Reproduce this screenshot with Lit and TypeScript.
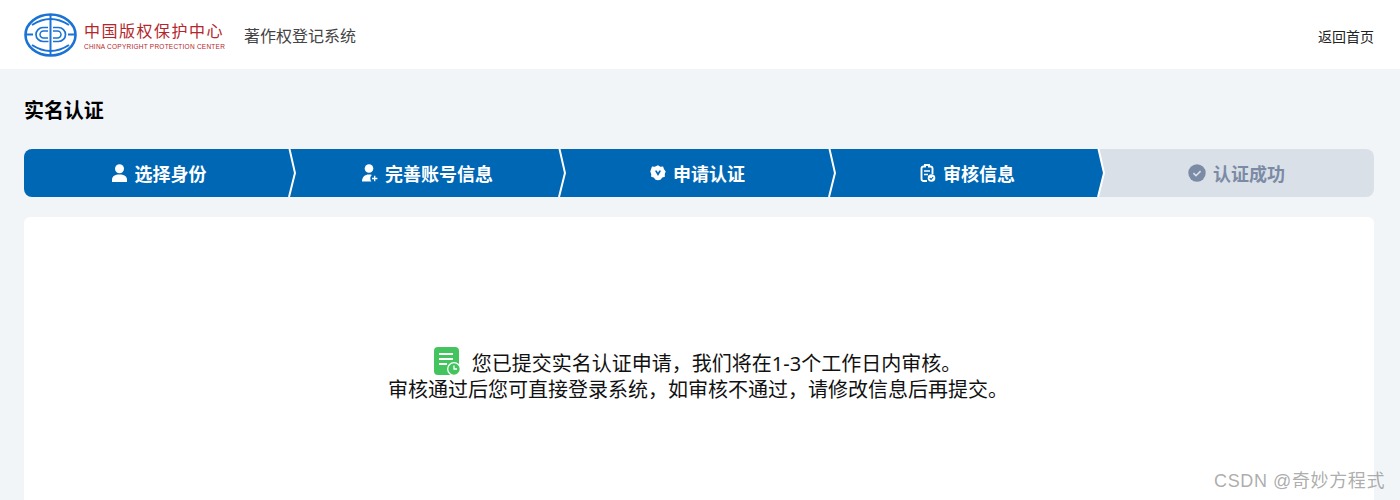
import { LitElement, html, css, svg } from "lit";
import { customElement } from "lit/decorators.js";

const icons = {
  user: svg`<svg class="ico" viewBox="0 0 16 18"><circle cx="7.500" cy="4.700" r="4.500" fill="currentColor"/><path d="M0 18v-2.200C0 12.300 3 10.500 7.500 10.500S15 12.300 15 15.800V18z" fill="currentColor"/></svg>`,
  userAdd: svg`<svg class="ico" viewBox="0 0 16 18"><circle cx="7" cy="4.500" r="4.300" fill="currentColor"/><path d="M0 17.500c.2-4.800 2.700-7 7-7 1 0 2 .1 2.800.5-.9.800-1.500 2-1.500 3.300 0 1.200.4 2.400 1.200 3.200z" fill="currentColor"/><path d="M12.700 11.800v5.400M10 14.500h5.400" stroke="currentColor" stroke-width="1.300" fill="none"/></svg>`,
  badge: svg`<svg class="ico" viewBox="0 0 17 18"><path d="M8.500 .8l2.500 1.500 2.900-.1 1 2.700 1.800 2.400-1 2.700.1 2.900-2.700 1-2 2.300-2.600.5-2.600-.5-2-2.300-2.700-1 .1-2.900-1-2.700L1.100 4.900l1-2.700 2.900.1z" fill="currentColor"/><path d="M5.200 6.500l3.300 5.700 3.300-5.700-2-.2-1.300 2.500-1.300-2.500z" fill="#0067b5"/></svg>`,
  clip: svg`<svg class="ico" viewBox="0 0 15 18"><path d="M6.500 17H3A2 2 0 0 1 1 15V4A2 2 0 0 1 3 2.500h1.500V1h4v1.500H10A2 2 0 0 1 12 4v6" fill="none" stroke="currentColor" stroke-width="1.900"/><path d="M3.500 7h6M3.500 10.500h4" stroke="currentColor" stroke-width="1.600"/><circle cx="11" cy="14" r="3.800" fill="currentColor"/><path d="M9.200 14l1.400 1.400 2.100-2.400" stroke="#0067b5" stroke-width="1.100" fill="none"/></svg>`,
  check: svg`<svg class="ico wide" viewBox="0 0 18 18"><circle cx="9" cy="9" r="8.700" fill="currentColor"/><path d="M5.400 9.200l2.600 2.500 4.600-4.600" stroke="#dae0e7" stroke-width="1.600" fill="none"/></svg>`,
};

const steps = [
  { icon: icons.user, label: "选择身份", on: true, pad: 0, sepRight: -2, next: "#0067b5" },
  { icon: icons.userAdd, label: "完善账号信息", on: true, pad: 3, sepRight: -2, next: "#0067b5" },
  { icon: icons.badge, label: "申请认证", on: true, pad: 3, sepRight: -2, next: "#0067b5" },
  { icon: icons.clip, label: "审核信息", on: true, pad: 3, sepRight: -1, next: "#dae0e7" },
  { icon: icons.check, label: "认证成功", on: false, pad: 5, sepRight: 0, next: "" },
];

@customElement("app-root")
export class AppRoot extends LitElement {
  static styles = css`
    :host {
      display: block;
      position: relative;
      height: 500px;
      overflow: hidden;
      background: #f2f5f8;
      font-family: "Noto Sans CJK SC", "Noto Sans", sans-serif;
      color: #111;
    }
    header {
      height: 69px;
      background: #fff;
      display: flex;
      align-items: center;
      padding: 0 26px 0 24px;
      box-sizing: border-box;
    }
    .logo { width: 53px; height: 44px; margin-right: 7px; flex: none; }
    .org { width: 141px; color: #b3262c; flex: none; margin-top: 2px; }
    .org .cn {
      font-size: 16px;
      line-height: 20px;
      letter-spacing: 1.500px;
      white-space: nowrap;
    }
    .org .en {
      font-family: "Liberation Sans", sans-serif;
      font-size: 6.500px;
      line-height: 8px;
      letter-spacing: 0.240px;
      white-space: nowrap;
      margin-top: 3px;
    }
    .sys { margin-left: 19px; font-size: 16px; color: #444; }
    .home { margin-left: auto; font-size: 14px; color: #222; margin-top: 2px; }
    main { padding: 0 26px 0 24px; }
    h1 {
      margin: 0;
      padding: 27px 0;
      height: 26px;
      font-size: 20px;
      line-height: 28px;
      font-weight: 700;
      color: #000;
      letter-spacing: -0.100px;
    }
    .steps { display: flex; height: 48px; border-radius: 8px; overflow: hidden; }
    .step {
      flex: 0 0 20%;
      box-sizing: border-box;
      position: relative;
      display: flex;
      align-items: center;
      justify-content: center;
      gap: 7px;
      font-size: 18px;
      font-weight: 700;
    }
    .step.on { background: #0067b5; color: #fff; }
    .step.off { background: #dae0e7; color: #7b8ba5; }
    .ico { width: 16px; height: 18px; flex: none; }
    .ico.wide { width: 18px; }
    .sep {
      position: absolute;
      top: 0;
      width: 8px;
      height: 48px;
      z-index: 1;
    }
    .card {
      margin-top: 20px;
      height: 300px;
      background: #fff;
      border-radius: 6px;
      padding-top: 134px;
      box-sizing: border-box;
      font-size: 20px;
      line-height: 26px;
      color: #111;
      font-family: "Noto Sans", "Noto Sans CJK SC", sans-serif;
    }
    .line { display: flex; justify-content: center; align-items: center; height: 26px; padding-right: 2px; }
    .doc { width: 26px; height: 29px; margin: -6px 12px 0 -1px; flex: none; }
    .mark {
      position: absolute;
      right: 15px;
      bottom: 6px;
      font-size: 18px;
      line-height: 26px;
      color: rgba(120, 120, 120, 0.62);
      font-family: "Liberation Sans", "Noto Sans CJK SC", sans-serif;
      letter-spacing: 0.600px;
    }
  `;

  render() {
    return html`
      <header>
        <svg class="logo" viewBox="0 0 53 44" fill="none" stroke="#1a73d4">
          <ellipse cx="26.500" cy="22" rx="25" ry="20.500" stroke-width="2.600"/>
          <path d="M8 12Q26.500 0 45 12M8 32Q26.500 44 45 32" stroke-width="2"/>
          <path d="M26.500 1.500v41" stroke-width="2"/>
          <path d="M2 21.500h7M44 21.500h7" stroke-width="1.800"/>
          <path d="M24 14.500H19a7 7 0 0 0 0 14h5.500" stroke-width="1.700"/>
          <path d="M24 18H19.500a3.500 3.500 0 0 0 0 7H24" stroke-width="1.500"/>
          <path d="M29 14.500h5.500a7 7 0 0 1 0 14H29" stroke-width="1.700"/>
          <path d="M29 18h4.500a3.500 3.500 0 0 1 0 7H29" stroke-width="1.500"/>
        </svg>
        <div class="org">
          <div class="cn">中国版权保护中心</div>
          <div class="en">CHINA COPYRIGHT PROTECTION CENTER</div>
        </div>
        <div class="sys">著作权登记系统</div>
        <div class="home">返回首页</div>
      </header>
      <main>
        <h1>实名认证</h1>
        <div class="steps">
          ${steps.map(
            (s, i) => html`
              <div class="step ${s.on ? "on" : "off"}" style="padding-right:${s.pad}px">
                ${s.icon}<span>${s.label}</span>
                ${i < 4
                  ? html`<svg class="sep" style="right:${s.sepRight}px" viewBox="0 0 8 48"><path d="M1.500 0L7 24 1 48H8V0z" fill="${s.next}"/><path d="M1.500 0L7 24 1 48" fill="none" stroke="#fff" stroke-width="2"/></svg>`
                  : ""}
              </div>
            `
          )}
        </div>
        <div class="card">
          <div class="line">
            <svg class="doc" viewBox="0 0 26 29">
              <rect x="0" y="0" width="25" height="28" rx="4" fill="#43c45e"/>
              <path d="M5 7h14M5 12h14M5 17h8" stroke="#fff" stroke-width="1.800" fill="none"/>
              <circle cx="20" cy="22" r="6.300" fill="#43c45e" stroke="#fff" stroke-width="1.300"/>
              <path d="M20 18.500V22h3" stroke="#fff" stroke-width="1.300" fill="none"/>
            </svg>
            <span>您已提交实名认证申请，我们将在1-3个工作日内审核。</span>
          </div>
          <div class="line">审核通过后您可直接登录系统，如审核不通过，请修改信息后再提交。</div>
        </div>
      </main>
      <div class="mark">CSDN @奇妙方程式</div>
    `;
  }
}
